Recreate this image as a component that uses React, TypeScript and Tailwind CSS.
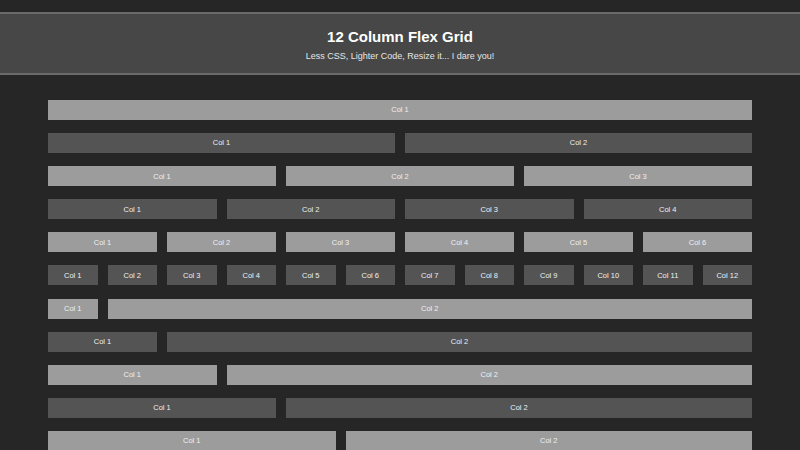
const rows: number[][] = [
  [12],
  [6, 6],
  [4, 4, 4],
  [3, 3, 3, 3],
  [2, 2, 2, 2, 2, 2],
  [1, 1, 1, 1, 1, 1, 1, 1, 1, 1, 1, 1],
  [1, 11],
  [2, 10],
  [3, 9],
  [4, 8],
  [5, 7],
];

const span: Record<number, string> = {
  1: "col-span-1",
  2: "col-span-2",
  3: "col-span-3",
  4: "col-span-4",
  5: "col-span-5",
  6: "col-span-6",
  7: "col-span-7",
  8: "col-span-8",
  9: "col-span-9",
  10: "col-span-10",
  11: "col-span-11",
  12: "col-span-12",
};

export default function App() {
  return (
    <div className="min-h-screen bg-[#262626] pt-3 font-['Liberation_Sans',Arial,sans-serif]">
      <header className="border-y-2 border-[#6a6a6a] bg-[#474747] h-[63px] flex flex-col items-center pt-[13px]">
        <h1 className="text-[15px] leading-[20px] font-bold text-white">12 Column Flex Grid</h1>
        <p className="text-[9px] leading-[12px] mt-[3px] text-[#e6e6e6]">
          Less CSS, Lighter Code, Resize it... I dare you!
        </p>
      </header>

      <main className="mx-[48px] pt-[25px] flex flex-col gap-[13.1px]">
        {rows.map((row, i) => (
          <div key={i} className="grid grid-cols-12 gap-x-[10px]">
            {row.map((n, j) => (
              <div
                key={j}
                className={`${span[n]} h-[20px] flex items-center justify-center text-[7.5px] text-[#f0f0f0] ${
                  i % 2 === 0 ? "bg-[#9c9c9c]" : "bg-[#545454]"
                }`}
              >
                Col {j + 1}
              </div>
            ))}
          </div>
        ))}
      </main>
    </div>
  );
}
